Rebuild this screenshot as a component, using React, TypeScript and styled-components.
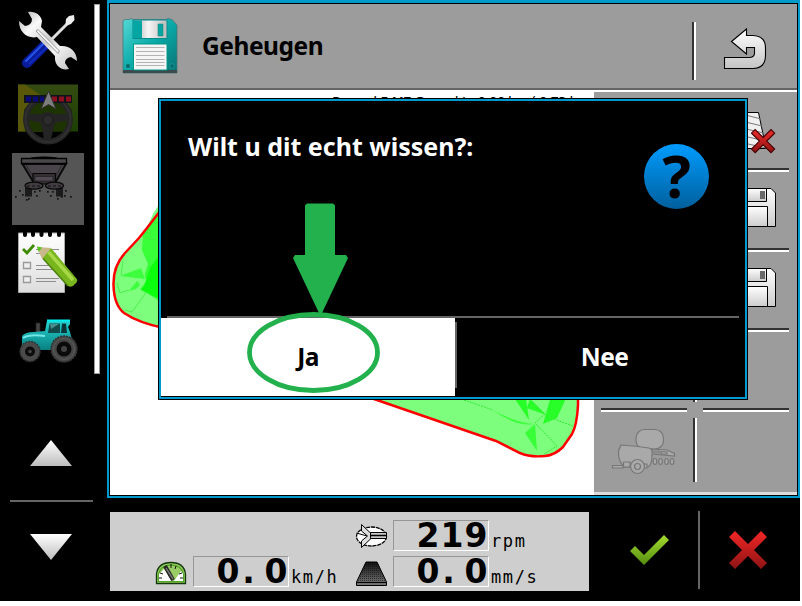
import React from "react";
import styled, { createGlobalStyle } from "styled-components";

const BLUE = "#0099cc";
const GRAY = "#9c9c9c";
const RULE = "#666464";
const MARK = "#22b14c";

const GlobalStyle = createGlobalStyle`
  *, *::after { box-sizing: border-box; }
  body { margin: 0; background: #fff; font-family: "Noto Sans", sans-serif; overflow: hidden; }
  svg { display: block; flex: none; }
`;

const Terminal = styled.div`
  position: relative;
  display: flex;
  width: 800px;
  height: 601px;
  background: #000;
`;

const Sidebar = styled.aside`
  display: flex;
  width: 107px;
`;

const AppColumn = styled.div`
  display: flex;
  flex-direction: column;
  width: 94px;
  padding-top: 3px;
`;

const AppList = styled.nav`
  display: flex;
  flex-direction: column;
  align-items: center;
  gap: 3px;
  padding-left: 2px;
  height: 437px;
`;

const AppSlot = styled.div<{ $active?: boolean }>`
  width: 72px;
  height: 72px;
  background: ${(p) => (p.$active ? "#555" : "transparent")};
`;

const ScrollBar = styled.div`
  width: 6px;
  height: 370px;
  margin-top: 4px;
  background: #fff;
  border: 1px solid #9a9a9a;
`;

const PageButton = styled.div`
  height: 60px;
  padding-left: 30px;
`;

const PageRule = styled.div`
  width: 83px;
  height: 2px;
  margin: 0 0 32px 10px;
  background: ${RULE};
`;

const Main = styled.main`
  width: 693px;
`;

const Panel = styled.section`
  height: 498px;
  border: 2px solid ${BLUE};
  border-top-width: 3px;
`;

const PanelInner = styled.div`
  height: 493px;
  border: 1px solid #000;
  background: #fff;
`;

const Header = styled.header`
  display: flex;
  height: 86px;
  background: ${GRAY};
  border-bottom: 2px solid ${RULE};
`;

const Title = styled.h1`
  width: 514px;
  margin: 0;
  padding: 25px 0 0 24px;
  font-size: 24.5px;
  line-height: 34px;
  font-weight: 700;
  letter-spacing: -0.45px;
  color: #000;
`;

const Groove = styled.div<{ $h: number; $top: number }>`
  width: 4px;
  height: ${(p) => p.$h}px;
  margin-top: ${(p) => p.$top}px;
  border-left: 2px solid #333;
  border-right: 2px solid #fff;
`;

const Body = styled.div`
  display: flex;
`;

const MapArea = styled.div`
  position: relative;
  width: 484px;
  height: 405px;
`;

const FieldInfo = styled.div`
  position: absolute;
  top: 3px;
  left: 222px;
  font: 14px/18px "DejaVu Sans", sans-serif;
  letter-spacing: -0.95px;
  white-space: pre;
`;

const SoftKeys = styled.div`
  width: 203px;
  height: 403px;
  margin-top: 2px;
  background: ${GRAY};
  border-bottom: 3px solid #dcdcdc;
`;

const KeyRow = styled.div`
  display: flex;
  height: 80px;
`;

const Key = styled.div<{ $line: boolean; $right?: boolean }>`
  display: flex;
  flex-direction: column;
  width: ${(p) => (p.$right ? 100 : 99)}px;
  padding: 0 ${(p) => (p.$right ? "8px 0 6px" : "6px 0 7px")};
  &::after {
    content: "";
    height: 4px;
    border-top: 2px solid #333;
    border-bottom: 2px solid #fff;
    visibility: ${(p) => (p.$line ? "visible" : "hidden")};
  }
`;

const KeyFace = styled.div`
  height: 76px;
`;

const Footer = styled.footer`
  display: flex;
  height: 79px;
  margin: 14px 0 0 3px;
`;

const Readouts = styled.div`
  display: grid;
  grid-template-columns: 38px 96px 66px 38px 96px 100px;
  grid-template-rows: 31px 31px;
  row-gap: 5px;
  width: 479px;
  padding: 8px 0 0 45px;
  background: #cecece;
`;

const Value = styled.div<{ $col: number }>`
  grid-column: ${(p) => p.$col};
  display: flex;
  justify-content: flex-end;
  border: 1px solid;
  border-color: #969696 #fff #fff #969696;
  color: #000;
  font: 700 33px/29px "DejaVu Sans", sans-serif;
`;

const Digit = styled.span<{ $point: boolean }>`
  width: 24px;
  padding-right: ${(p) => (p.$point ? 7 : 0)}px;
  text-align: center;
`;

const Unit = styled.div`
  padding: 10px 0 0 2px;
  color: #000;
  font: 17px/22px "DejaVu Sans Mono", monospace;
  letter-spacing: 1.6px;
`;

const Confirm = styled.div`
  width: 109px;
  padding: 20px 0 0 41px;
`;

const FooterRule = styled.div`
  width: 2px;
  height: 78px;
  margin-top: -1px;
  background: ${RULE};
`;

const Cancel = styled.div`
  padding: 17px 0 0 29px;
`;

const Dialog = styled.div`
  position: absolute;
  left: 158px;
  top: 98px;
  width: 590px;
  height: 302px;
  border: 1px solid #000;
  background: #000;
`;

const DialogFrame = styled.div`
  height: 300px;
  border: 2px solid ${BLUE};
`;

const Message = styled.div`
  display: flex;
  justify-content: space-between;
  height: 215px;
  padding: 28px 36px 0 27px;
  color: #fff;
  font-size: 25px;
  line-height: 34px;
  font-weight: 700;
`;

const DialogRule = styled.div`
  height: 2px;
  margin: 0 6px;
  background: ${RULE};
`;

const Choices = styled.div`
  display: flex;
  height: 78px;
`;

const Choice = styled.button<{ $selected?: boolean }>`
  width: ${(p) => (p.$selected ? 294 : 288)}px;
  height: 78px;
  padding: 0 0 0 ${(p) => (p.$selected ? 0 : 7)}px;
  border: 0;
  background: ${(p) => (p.$selected ? "#fff" : "#000")};
  color: ${(p) => (p.$selected ? "#000" : "#fff")};
  font: 700 24.5px/34px "Noto Sans", sans-serif;
  letter-spacing: -0.6px;
`;

const ChoiceRule = styled.div`
  width: 2px;
  height: 66px;
  margin-top: 4px;
  background: ${RULE};
`;

const Annotation = styled.svg`
  position: absolute;
  left: 245px;
  top: 200px;
`;

const Vert = ({ id, a, b }: { id: string; a: string; b: string }) => (
  <linearGradient id={id} x1="0" y1="0" x2="0" y2="1">
    <stop offset="0" stopColor={a} />
    <stop offset="1" stopColor={b} />
  </linearGradient>
);

const ToolsIcon = () => (
  <svg width="72" height="72" viewBox="12 3 72 72">
    <defs>
      <linearGradient id="steel" x1="0" y1="0" x2="1" y2="1">
        <stop offset="0" stopColor="#aaa" /><stop offset=".25" stopColor="#fafafa" />
        <stop offset=".5" stopColor="#ccc" /><stop offset=".65" stopColor="#f4f4f4" />
        <stop offset="1" stopColor="#bbb" />
      </linearGradient>
    </defs>
    <path d="M27 63L45 45" stroke="#0a1c9c" strokeWidth="10" strokeLinecap="round" />
    <path d="M26 61L43 44" stroke="#2450e8" strokeWidth="2.4" strokeLinecap="round" />
    <path d="M29 64L47 47" stroke="#1330c8" strokeWidth="1.5" />
    <path d="M50 41L68 23" stroke="#ddd" strokeWidth="3" />
    <path d="M65.500 24L66 19L69 16L74 15L74.500 20L71 24L67 25.500Z" fill="#eee" />
    <path d="M28 12C35 11 41 15 42 21L41 27L60 46C69 45 77 51 77 61L71 57Q65 58 65 63L69 69C61 71 54 65 55 56L37 37C28 39 19 33 19 21L25 26Q32 25 32 19Z" fill="url(#steel)" />
    <path d="M36 31L38 29.500L59.500 51L58 53.500Z" fill="#f2f2f2" stroke="#8f8f8f" strokeWidth=".9" />
  </svg>
);

const SteeringIcon = () => (
  <svg width="72" height="72" viewBox="12 78 72 72">
    <defs><Vert id="lawn" a="#344b12" b="#1c4000" /></defs>
    <path d="M18 84.5H78V131.5H18Z" fill="url(#lawn)" />
    <path d="M18 84.5H25L48 100V131.5H18Z" fill="#59580a" />
    <path d="M24 110Q30 100 48 98Q66 100 72 110L71 131.500H25Z" fill="#1d3302" />
    <circle cx="48" cy="119.500" r="22" fill="none" stroke="#252525" strokeWidth="6" />
    <circle cx="48" cy="119.500" r="22.500" fill="none" stroke="#303030" strokeWidth="2" />
    <path d="M28 114L42 114Q48 110 54 114L69 114L69 120L55 123L51 139H44L41 123L28 120Z" fill="#242424" />
    <circle cx="48" cy="120" r="5" fill="#2c2c2c" stroke="#191919" />
    <path d="M24 95H72V103H24Z" fill="#11131a" />
    <path d="M26 96.500H31V101.500H26ZM33 96.500H38V101.500H33ZM40 96.500H44V101.500H40Z" fill="#0a0a78" />
    <path d="M52 96.500H57V101.500H52ZM59 96.500H64V101.500H59ZM66 96.500H71V101.500H66Z" fill="#8c1020" />
    <path d="M48.500 91L56 109L48.500 104.500L41 109Z" fill="#7d7d7d" stroke="#303030" />
  </svg>
);

const DUST = [[20, 191], [23, 195], [16, 197], [27, 200], [35, 192], [37, 196], [40, 191], [48, 192], [51, 196], [53, 192], [58, 199], [66, 191], [65, 196], [71, 197], [29, 199], [62, 197]];

const SpreaderIcon = () => (
  <svg width="72" height="72" viewBox="12 153 72 72">
    <path d="M31 158.500Q44 156.500 57 158.500" fill="none" stroke="#000" strokeWidth="2" />
    <path d="M22.500 164L34 183H55L66 164Z" fill="#48444a" stroke="#0a0a0a" strokeWidth="2" />
    <path d="M21.500 158.500H66.500V163.500H21.500Z" fill="#4b484c" stroke="#000" strokeWidth="1.300" />
    <path d="M26 165L36 181M62 165L53 181" stroke="#2c292d" />
    <path d="M33 173.500H55.500V184H33Z" fill="#343034" stroke="#050505" strokeWidth="1.200" />
    <path d="M35 176.500H53V181H35Z" fill="#524a52" stroke="#202020" strokeWidth=".7" />
    <path d="M25 188H32V196.500H25ZM56 188H63V196.500H56Z" fill="#1b1b1b" />
    <ellipse cx="34" cy="185.700" rx="9" ry="3.500" fill="#403c40" stroke="#090909" strokeWidth="1.300" />
    <ellipse cx="54.500" cy="185.700" rx="9" ry="3.500" fill="#403c40" stroke="#090909" strokeWidth="1.300" />
    <path d="M27 186H41M48 186H61" stroke="#111" strokeDasharray="3 2" />
    {DUST.map(([x, y], i) => <rect key={i} x={x - 1} y={y - 1} width="1.700" height="1.700" fill="#111" />)}
  </svg>
);

const NotesIcon = () => (
  <svg width="72" height="72" viewBox="12 228 72 72">
    <defs><Vert id="paper" a="#fff" b="#ddd" /></defs>
    <path d="M18.500 233H64.500V292.500H18.500Z" fill="url(#paper)" stroke="#aaa" />
    {[25, 33, 41.5, 50, 59].map((x) => (
      <path key={x} d={`M${x} 232V235`} stroke="#000" strokeWidth="4" strokeLinecap="round" />
    ))}
    <path d="M36 249.500H59M36 253.500H56M36 265.500H56M36 269.500H58M36 278.500H59M36 281.500H56" stroke="#8e8e8e" />
    <path d="M23.500 262.500H30.500V268.500H23.500ZM23.500 276.500H30.500V282.500H23.500Z" fill="#eee" stroke="#999" strokeWidth="1.300" />
    <path d="M23 249L27 253L34 245" fill="none" stroke="#3e8a00" strokeWidth="2.800" />
    <path d="M42 258L68 286Q72 288 75 284Q79 281 76 278L51 248Z" fill="#79b51c" />
    <path d="M48.500 252L73 280" stroke="#a8d848" strokeWidth="3.500" />
    <path d="M43 258.500L68 286" stroke="#4c8210" strokeWidth="1.500" />
    <path d="M37 247L42 259L51 248Z" fill="#c9b98a" />
    <path d="M37 246.500L38.500 252L42 247.500Z" fill="#50c41a" />
  </svg>
);

const TractorIcon = () => (
  <svg width="72" height="72" viewBox="12 303 72 72">
    <defs><Vert id="teal" a="#25d5d2" b="#098080" /></defs>
    <path d="M36 323H40V334H36Z" fill="#444" stroke="#222" strokeWidth=".7" />
    <path d="M22 345V336Q25 332 34 332L45 331L47 320.500H70V324L68 327L70 332L72 340L60 350H38Z" fill="url(#teal)" />
    <path d="M23 338Q29 334 45 336" fill="none" stroke="#73e7e5" strokeWidth="2" />
    <path d="M47 320.500H70" stroke="#0ee" strokeWidth="2" />
    <path d="M49.500 323.500H60V333H48Z" fill="#12494b" />
    <path d="M62 323.500H66L67 333H61Z" fill="#0b3639" />
    <path d="M50 324H59L51 329Z" fill="#4a8d8e" />
    <circle cx="30" cy="351.500" r="10" fill="#4a4a4a" stroke="#333" strokeWidth="1.500" strokeDasharray="2 1" />
    <circle cx="30" cy="351.500" r="5" fill="#0c0c0c" /><circle cx="30" cy="351.500" r="1.800" fill="#444" />
    <circle cx="64" cy="349" r="13" fill="#464646" stroke="#333" strokeWidth="1.500" strokeDasharray="2 1" />
    <circle cx="64" cy="349" r="7.500" fill="#0a0a0a" /><circle cx="64" cy="349" r="3" fill="#444" />
    <circle cx="64" cy="349" r="10.500" fill="none" stroke="#5a5a5a" />
  </svg>
);

const PageArrow = ({ down }: { down?: boolean }) => (
  <svg width="42" height="26">
    <defs><Vert id={down ? "pd" : "pu"} a="#fff" b="#bdbdbd" /></defs>
    <path d={down ? "M0 0H42L21 26Z" : "M21 0L42 26H0Z"} fill={`url(#${down ? "pd" : "pu"})`} />
  </svg>
);

const DiskIcon = () => (
  <svg width="68" height="84" viewBox="110 4 68 84">
    <defs>
      <linearGradient id="disk" x1="0" y1="0" x2="1" y2="1">
        <stop offset="0" stopColor="#55d8d5" /><stop offset=".5" stopColor="#09aaa8" /><stop offset="1" stopColor="#087273" />
      </linearGradient>
      <linearGradient id="shutter"><stop offset="0" stopColor="#aaa" /><stop offset=".45" stopColor="#f5f5f5" /><stop offset="1" stopColor="#bbb" /></linearGradient>
    </defs>
    <path d="M123 21L125 19.500H129L131 18.500L133 19.500H166L168 18.500L172 19.500L177 25V73H123Z" fill="url(#disk)" stroke="#4b7777" strokeWidth=".8" />
    <path d="M123 70H177V73H123Z" fill="#3b4b4d" />
    <path d="M133 20H167V38.500H133Z" fill="url(#shutter)" stroke="#08898a" />
    <path d="M133 20.500H142V38H133Z" fill="#04a6a4" />
    <path d="M158 24H163V36H158Z" fill="#04a5a3" stroke="#287" strokeWidth=".6" />
    <path d="M133.500 44H167V70H133.500Z" fill="#f5f5f5" stroke="#098" />
    <path d="M136 47.500H164.500M136 51.500H164.500M136 55.500H164.500M136 59.500H164.500M136 62.500H164.500M136 65.500H164.500" stroke="#b4b4b4" />
    <path d="M126 64H130V68H126ZM170 64H174V68H170Z" fill="#066" stroke="#2aa" strokeWidth=".6" />
  </svg>
);

const BackIcon = () => (
  <svg width="101" height="84" viewBox="696 4 101 84">
    <defs><Vert id="back" a="#fff" b="#c4c4c4" /></defs>
    <path d="M731.500 41.500L746.500 29V35.500H753Q765.500 36 765.500 48V56Q765 68.500 753 68.500H724.500V57.500H750Q754.500 57 754.500 53V47.500H746.500V54Z" fill="url(#back)" stroke="#000" strokeWidth="1.100" />
  </svg>
);

const CROSS = "M0 6L6 0L19 13L32 0L38 6L25 19L38 32L32 38L19 25L6 38L0 32L13 19Z";

const DeleteFieldIcon = () => (
  <svg width="86" height="76" viewBox="703 92 86 76">
    <defs><Vert id="delx" a="#ee2c2c" b="#8f1212" /></defs>
    <path d="M733 112.500H758.500L766 148.500H726Z" fill="#f0f0f0" stroke="#000" />
    <path d="M730 111L761 119M729 118L762 126M728 125L764 133M727 132L765 141M726 139L766 148M726 145L740 148.500" stroke="#777" />
    <g transform="translate(751.500 129.500) scale(.61)"><path d={CROSS} fill="url(#delx)" stroke="#400" strokeWidth="1.800" /></g>
  </svg>
);

const SaveIcon = ({ id }: { id: string }) => (
  <svg width="86" height="76" viewBox="703 172 86 76">
    <defs><Vert id={id} a="#fff" b="#ccc" /></defs>
    <path d="M720.500 188.500H771L775.500 193V226.500H720.500Z" fill={`url(#${id})`} stroke="#000" />
    <path d="M730.500 188.500H766.500V201.500H730.500Z" fill={`url(#${id})`} stroke="#000" />
    <path d="M729.500 206.500H767.500V226.500H729.500Z" fill={`url(#${id})`} stroke="#000" />
    <path d="M760 191H765V199H760Z" fill="#6a6a6a" />
  </svg>
);

const SeederIcon = () => (
  <svg width="86" height="76" viewBox="601 412 86 76">
    <g fill="#a9a9a9" stroke="#777" strokeWidth="1.200">
      <rect x="636" y="429.500" width="27.500" height="19.500" rx="8.500" />
      <path d="M652 449L667 450L674.500 453.500V456L652 454Z" />
      <path d="M654 451H659V453H654ZM661 451.500L667 452V454H661Z" />
      <path d="M621 445Q636 446 649 448Q653 449 652 455Q652 465 648 467H624Q618 461 618.500 451Z" />
      <path d="M612.500 465.500H623V468H612.500ZM623.500 462H630V467H623.500ZM644 464H647V468H644Z" />
      <circle cx="637.500" cy="466.500" r="7" /><circle cx="637.500" cy="466.500" r="3" />
      {[655, 660.5, 666.5, 672].map((x) => <ellipse key={x} cx={x} cy="461.500" rx="1.800" ry="3" />)}
    </g>
  </svg>
);

const FieldMap = () => (
  <svg width="484" height="405" viewBox="110 90 484 405">
    <path d="M165 195L153 214L147 228Q142 250 165 250Z" fill="#7dff7d" />
    <path d="M164 206L147 228L139 238L125 253Q113 266 113 284Q113 305 124 314Q139 324 164 328L374 400L496 441L520 453Q530 457 545 456.500Q555 455 563 447L572 434Q577 425 578 405V385Z" fill="#7dff7d" />
    <path d="M164 205L143 233L142 250L148 264L145 273V278L148 280L140 289L150 295L165 305Z" fill="#38ff38" />
    <path d="M164 249L150 268L144 286L141 290L164 301Z" fill="#0cff0c" />
    <path d="M120 276L141 268L145 279ZM129 291L137 281L140 285L136 289Z" fill="#3eff3e" />
    <path d="M123 261L121 275M117 283L120 293L129 290M147 291L132 312L125 310M143 237L156 240" fill="none" stroke="#41e941" strokeWidth=".8" />
    <path d="M515 399H526L529 420ZM530 399L546 415L527 408ZM551 396H567L557 418L543 424Z" fill="#28ff28" />
    <path d="M493 410Q516 423 535 424Q516 427 493 410ZM525 433L535 424L537 451Z" fill="#38ff38" />
    <path d="M464 400L493 410M532 401L545 414L535 423L557 446L544 454M551 418L573 426" fill="none" stroke="#35e935" strokeDasharray="2 1" />
    <path d="M164 206L147 228L139 238L125 253Q113 266 113.500 285Q114 305 124 313Q139 323 164 328L374 399L496 441L520 453Q530 457.500 545 456Q555 455 563 447L572 434Q577 425 578 405V385" fill="none" stroke="#f00" strokeWidth="2.500" />
  </svg>
);

const GaugeIcon = () => (
  <svg width="38" height="31" viewBox="155 556 38 31">
    <path d="M156.500 583.500V574Q158 562.500 171 562.500Q184 562.500 185.500 574V583.500Z" fill="#9acc66" stroke="#13380a" strokeWidth="1.300" />
    <path d="M158.500 581.500V575Q160 565 171 565Q182 565 183.500 575V581.500Z" fill="none" stroke="#55a52c" strokeWidth="1.500" />
    <path d="M159 581V574L164 569L172 581ZM183 581V574L181 571L174 581Z" fill="#fff" />
    <path d="M159 578H162M180 578H183M160 573L163 574M171 564V568M176 566L175 569M182 573L179 574" stroke="#111" />
    <path d="M165 566L173 580" stroke="#222" strokeWidth="4" /><path d="M166 568L173 579" stroke="#777" strokeWidth="1.400" />
  </svg>
);

const DiscIcon = () => (
  <svg width="38" height="31" viewBox="355 520 38 31">
    <ellipse cx="371.500" cy="536.500" rx="15" ry="9.500" fill="#fff" stroke="#000" strokeWidth="1.300" strokeDasharray="4 .8" />
    <path d="M361.500 524.500V531L367.500 536L361.500 541V547.500L371 538.500V533.500Z" fill="#ddd" stroke="#000" />
    <path d="M356.500 533L367 536" stroke="#000" />
    <path d="M370.500 532.500H386.500V538.500H370.500Z" fill="#c9c9c9" stroke="#000" /><path d="M371 535.500H386" stroke="#000" strokeWidth="1.500" />
  </svg>
);

const RollerIcon = () => (
  <svg width="38" height="31" viewBox="355 556 38 31">
    <defs>
      <Vert id="roll" a="#111" b="#777" />
      <pattern id="dots" width="2" height="2" patternUnits="userSpaceOnUse"><path d="M0 0H1V1H0Z" fill="#000" fillOpacity=".45" /></pattern>
    </defs>
    <path d="M366 562H377L386.500 582V585.500H356.500V582Z" fill="url(#roll)" stroke="#000" />
    <path d="M366 562H377L386.500 582H356.500Z" fill="url(#dots)" />
    <path d="M357 582.500H386" stroke="#000" />
  </svg>
);

const CheckIcon = () => (
  <svg width="40" height="44" viewBox="0 -3 40 44">
    <defs><Vert id="ok" a="#a4dc32" b="#548c10" /></defs>
    <path d="M0 16L5 11L14 20L34 0L39 5L14 30Z" fill="url(#ok)" />
  </svg>
);

const CrossIcon = () => (
  <svg width="38" height="44" viewBox="0 -2 38 44">
    <defs><Vert id="no" a="#f42626" b="#8c1414" /></defs>
    <path d={CROSS} fill="url(#no)" />
  </svg>
);

const QuestionIcon = () => (
  <svg width="65" height="86" viewBox="0 -15 65 86">
    <defs><Vert id="ask" a="#009cff" b="#005f9c" /></defs>
    <circle cx="32.500" cy="32.500" r="32.500" fill="url(#ask)" />
    <text x="32.500" y="54" textAnchor="middle" fontFamily="Noto Sans" fontWeight="700" fontSize="60">?</text>
  </svg>
);

const Reading = ({ value, col }: { value: string; col: number }) => (
  <Value $col={col}>
    {value.split("").map((c, i) => <Digit key={i} $point={c === "."}>{c}</Digit>)}
  </Value>
);

const rows: { left?: React.ReactNode; right?: React.ReactNode }[] = [
  { right: <DeleteFieldIcon /> },
  { right: <SaveIcon id="save1" /> },
  { right: <SaveIcon id="save2" /> },
  {},
  { left: <SeederIcon /> },
];

export default function App() {
  return (
    <>
      <GlobalStyle />
      <Terminal>
        <Sidebar>
          <AppColumn>
            <AppList>
              <AppSlot><ToolsIcon /></AppSlot>
              <AppSlot><SteeringIcon /></AppSlot>
              <AppSlot $active><SpreaderIcon /></AppSlot>
              <AppSlot><NotesIcon /></AppSlot>
              <AppSlot><TractorIcon /></AppSlot>
            </AppList>
            <PageButton><PageArrow /></PageButton>
            <PageRule />
            <PageButton><PageArrow down /></PageButton>
          </AppColumn>
          <ScrollBar />
        </Sidebar>
        <Main>
          <Panel>
            <PanelInner>
              <Header>
                <DiskIcon />
                <Title>Geheugen</Title>
                <Groove $h={58} $top={18} />
                <BackIcon />
              </Header>
              <Body>
                <MapArea>
                  <FieldMap />
                  <FieldInfo>Perceel-5 ME Gewerkt:  0.00 ha  ( 0.73 ha</FieldInfo>
                </MapArea>
                <SoftKeys>
                  {rows.map((r, i) => (
                    <KeyRow key={i}>
                      <Key $line={i < 4}><KeyFace>{r.left}</KeyFace></Key>
                      <Groove $h={64} $top={6} />
                      <Key $line={i < 4} $right><KeyFace>{r.right}</KeyFace></Key>
                    </KeyRow>
                  ))}
                </SoftKeys>
              </Body>
            </PanelInner>
          </Panel>
          <Footer>
            <Readouts>
              <span /><span /><span />
              <DiscIcon />
              <Reading value="219" col={5} />
              <Unit>rpm</Unit>
              <GaugeIcon />
              <Reading value="0.0" col={2} />
              <Unit>km/h</Unit>
              <RollerIcon />
              <Reading value="0.0" col={5} />
              <Unit>mm/s</Unit>
            </Readouts>
            <Confirm><CheckIcon /></Confirm>
            <FooterRule />
            <Cancel><CrossIcon /></Cancel>
          </Footer>
        </Main>
        <Dialog>
          <DialogFrame>
            <Message>
              <span>Wilt u dit echt wissen?:</span>
              <QuestionIcon />
            </Message>
            <DialogRule />
            <Choices>
              <Choice $selected>Ja</Choice>
              <ChoiceRule />
              <Choice>Nee</Choice>
            </Choices>
          </DialogFrame>
        </Dialog>
        <Annotation width="137" height="196" viewBox="245 200 137 196">
          <path d="M307 203.500H333L335 205.500V255H346L348 258L322 313H319L293 258L295 255H305V205.500Z" fill={MARK} />
          <ellipse cx="313.500" cy="352.500" rx="64" ry="38" fill="none" stroke={MARK} strokeWidth="4.800" />
        </Annotation>
      </Terminal>
    </>
  );
}
